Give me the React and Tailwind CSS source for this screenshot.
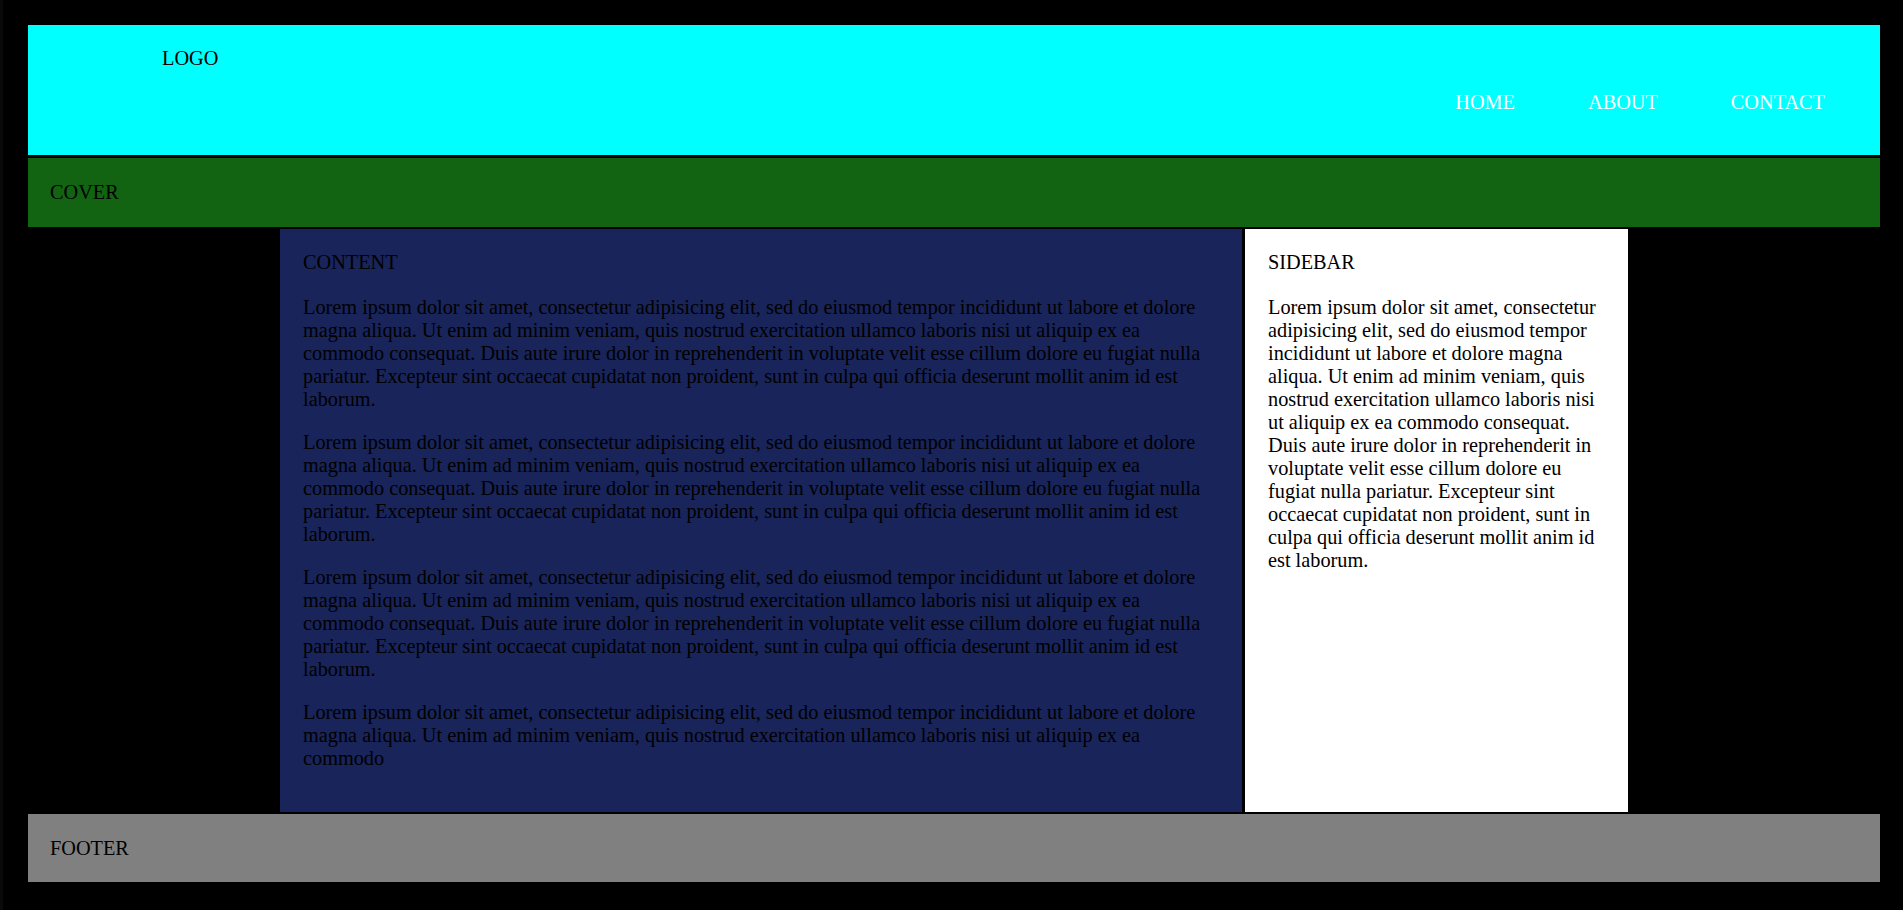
const lorem =
  'Lorem ipsum dolor sit amet, consectetur adipisicing elit, sed do eiusmod tempor incididunt ut labore et dolore magna aliqua. Ut enim ad minim veniam, quis nostrud exercitation ullamco laboris nisi ut aliquip ex ea commodo consequat. Duis aute irure dolor in reprehenderit in voluptate velit esse cillum dolore eu fugiat nulla pariatur. Excepteur sint occaecat cupidatat non proident, sunt in culpa qui officia deserunt mollit anim id est laborum.';

const shortLorem =
  'Lorem ipsum dolor sit amet, consectetur adipisicing elit, sed do eiusmod tempor incididunt ut labore et dolore magna aliqua. Ut enim ad minim veniam, quis nostrud exercitation ullamco laboris nisi ut aliquip ex ea commodo';

const navItems = ['HOME', 'ABOUT', 'CONTACT'];

export default function App() {
  return (
    <div className="min-h-screen bg-black border-l-[3px] border-[#0a0a0a] pt-[25px] pl-[25px] pr-[23px] pb-[28px] font-['Liberation_Serif','Times_New_Roman',serif] text-[20.3px] leading-[23px]">
      {/* header */}
      <header className="h-[130px] bg-[#00ffff] flex justify-between">
        <div className="pl-[134px] pt-[22px] text-black">LOGO</div>
        <nav className="pt-[66px] pr-[55px]">
          <ul className="flex gap-[73px] text-white">
            {navItems.map((item) => (
              <li key={item}>{item}</li>
            ))}
          </ul>
        </nav>
      </header>

      {/* cover */}
      <div className="mt-[3px] h-[69px] bg-[#126412] pl-[22px] pt-[23px] text-black">COVER</div>

      {/* main */}
      <div className="mt-[2px] h-[583px] flex justify-center gap-[3px]">
        <main className="w-[962px] bg-[#18245a] pl-[23px] pr-[23px] pt-[22px] text-black">
          <div className="mb-[22px]">CONTENT</div>
          <p className="mb-[20px]">{lorem}</p>
          <p className="mb-[20px]">{lorem}</p>
          <p className="mb-[20px]">{lorem}</p>
          <p>{shortLorem}</p>
        </main>
        <aside className="w-[383px] bg-white pl-[23px] pr-[23px] pt-[22px] text-black">
          <div className="mb-[22px]">SIDEBAR</div>
          <p>{lorem}</p>
        </aside>
      </div>

      {/* footer */}
      <footer className="mt-[2px] h-[68px] bg-[#808080] pl-[22px] pt-[23px] text-black">FOOTER</footer>
    </div>
  );
}
